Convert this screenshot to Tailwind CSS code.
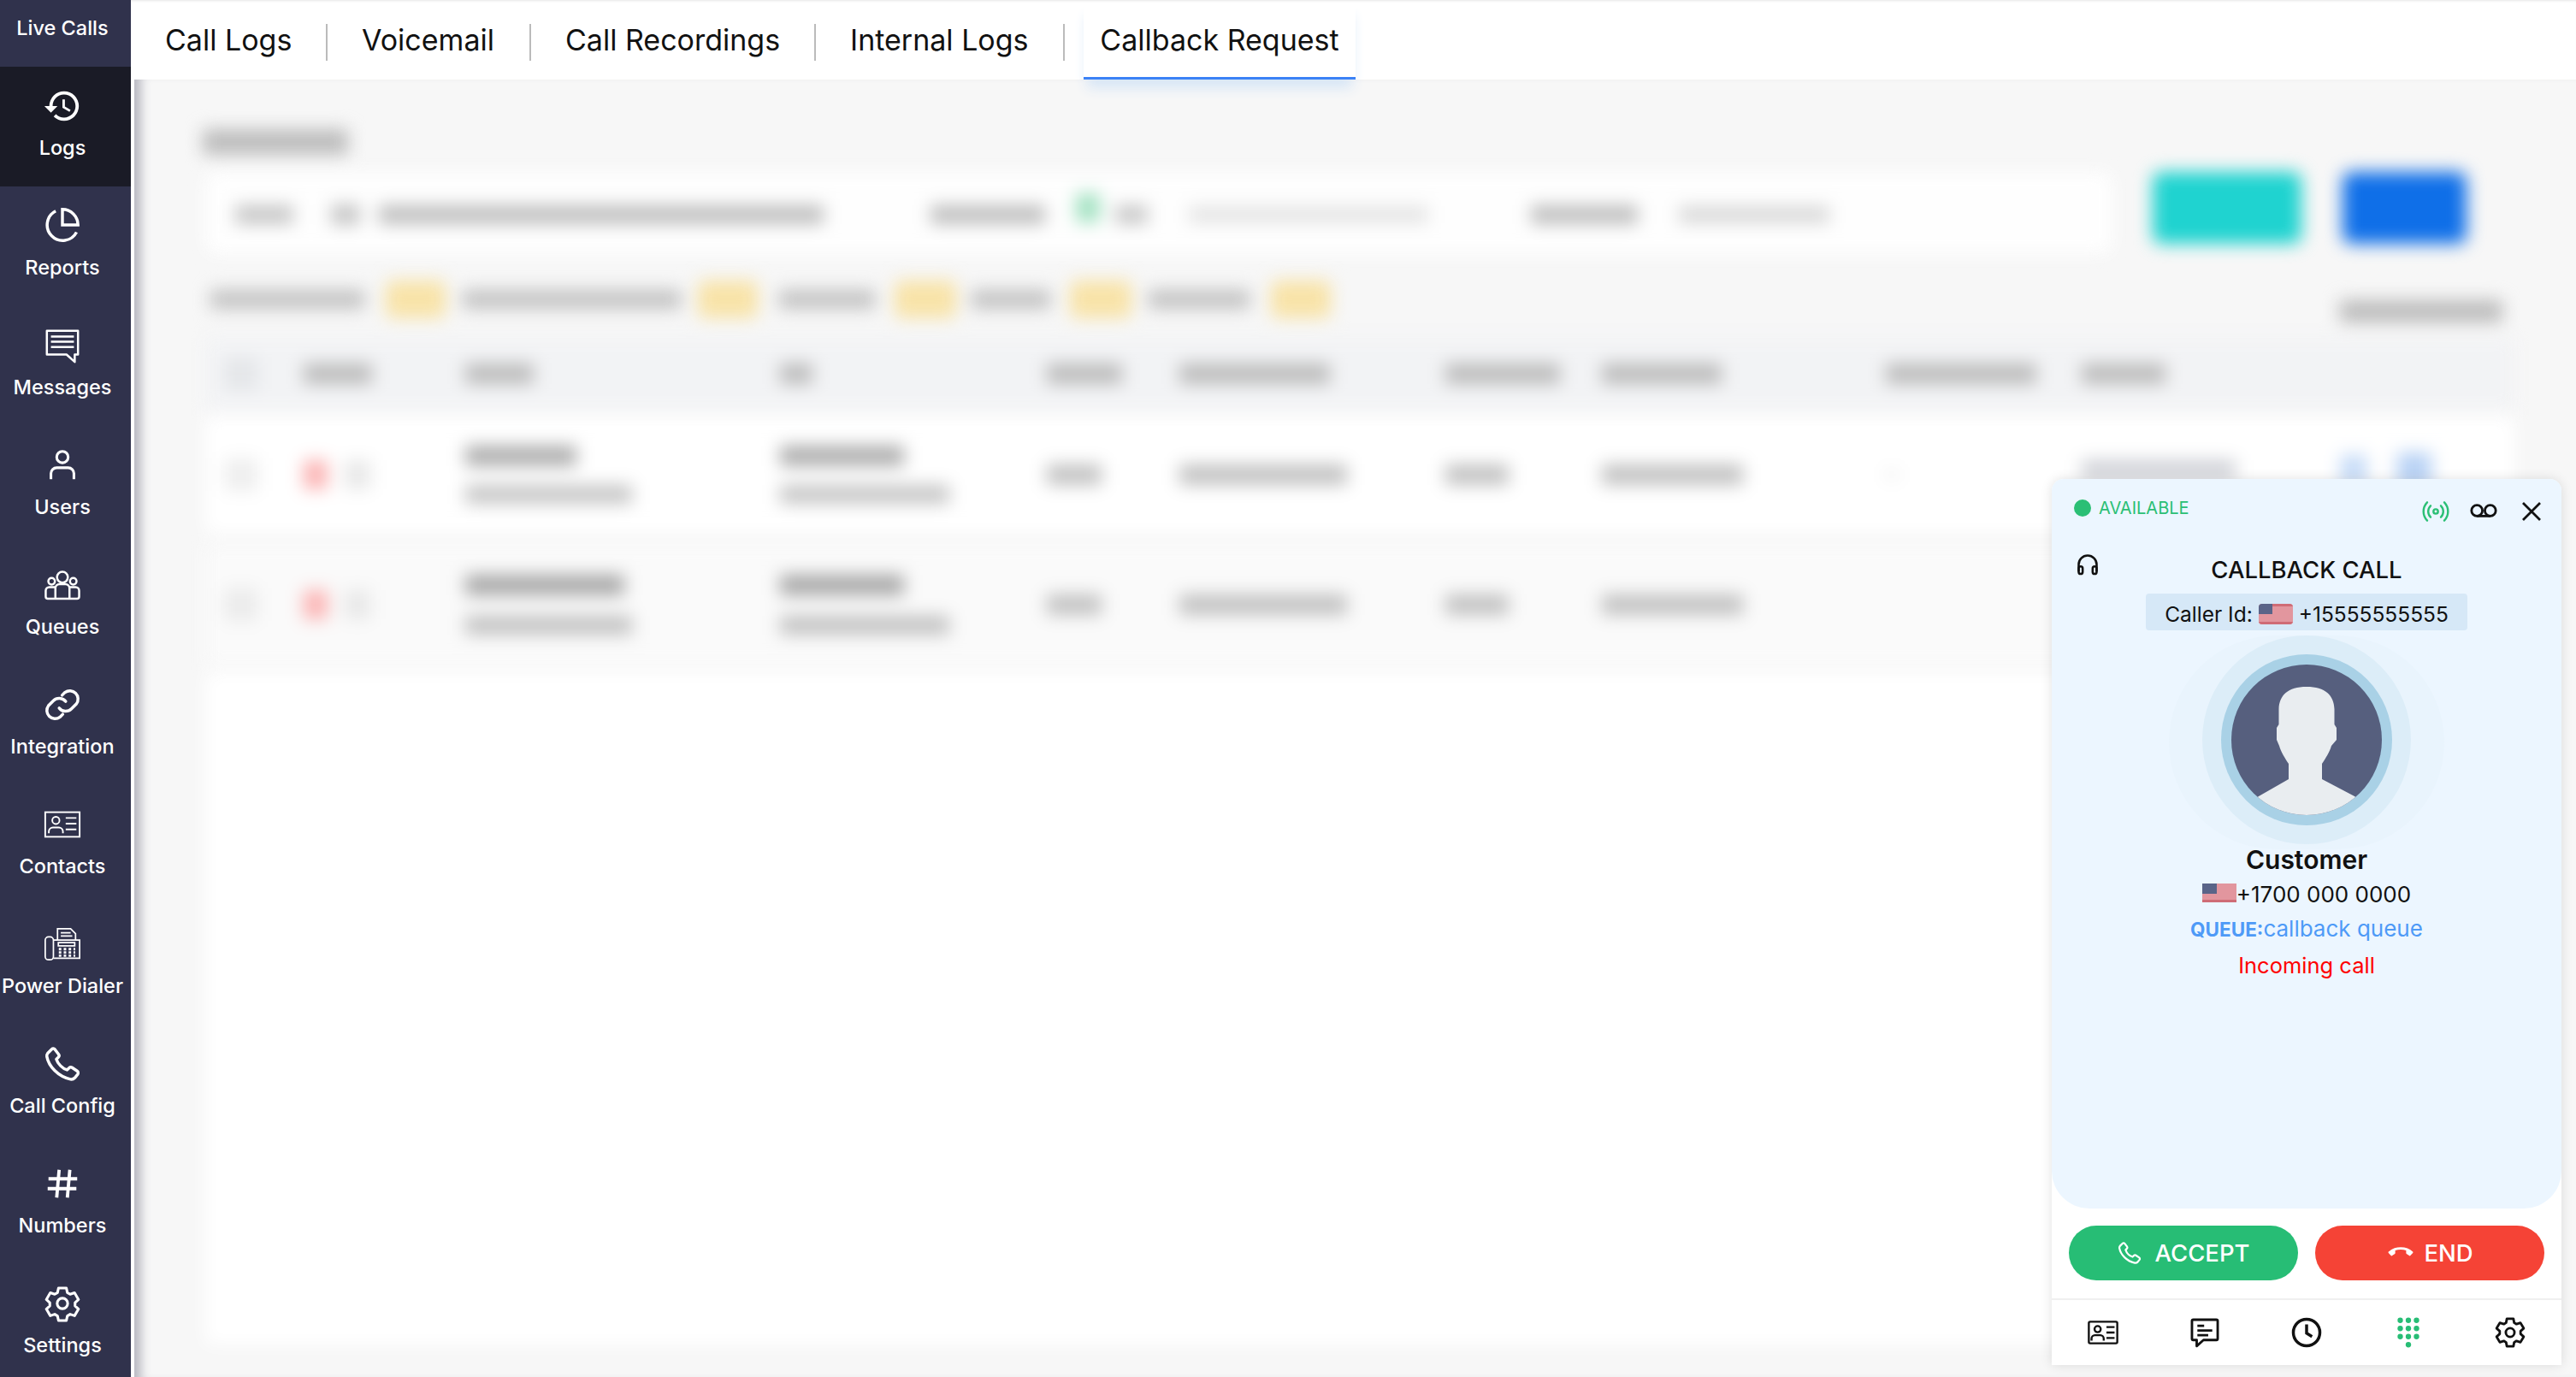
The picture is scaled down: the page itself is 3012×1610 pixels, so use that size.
<!DOCTYPE html>
<html lang="en">
<head>
    <meta charset="UTF-8">
    <title>Callback Request</title>
    <script src="https://cdn.jsdelivr.net/npm/@tailwindcss/browser@4"></script>
</head>
<body class="w-[3012px] h-[1610px] overflow-hidden flex bg-white font-['Inter',sans-serif] text-[#111]">

    <!-- Sidebar -->
    <nav class="w-[153px] h-[1610px] shrink-0 bg-[#30324c] text-white text-[23.5px] leading-[30px] font-medium overflow-hidden">
        <div class="h-[78px] flex items-center justify-center pb-[12px] pr-[7px]">Live Calls</div>

        <a class="h-[140px] flex flex-col items-center pt-[23px] pr-[7px] bg-[#1a1b26]">
            <svg class="w-[46px] h-[46px]" viewBox="0 0 24 24" fill="currentColor"><path d="M13 3a9 9 0 0 0-9 9H1l3.89 3.89.07.14L9 12H6c0-3.87 3.13-7 7-7s7 3.13 7 7-3.13 7-7 7c-1.93 0-3.68-.79-4.94-2.06l-1.42 1.42A8.954 8.954 0 0 0 13 21a9 9 0 0 0 0-18zm-1 5v5l4.28 2.54.72-1.21-3.5-2.08V8H12z"/></svg>
            <span class="mt-[11px]">Logs</span>
        </a>
        <a class="h-[140px] flex flex-col items-center pt-[23px] pr-[7px]">
            <svg class="w-[46px] h-[46px]" viewBox="0 0 24 24" fill="none" stroke="currentColor" stroke-width="1.8"><path d="M20.6 15.9A9.5 9.5 0 1 1 7.9 3"/><path d="M21.5 11.5A9.5 9.5 0 0 0 12 2v9.5z"/></svg>
            <span class="mt-[11px]">Reports</span>
        </a>
        <a class="h-[140px] flex flex-col items-center pt-[23px] pr-[7px]">
            <svg class="w-[46px] h-[46px]" viewBox="0 0 24 24" fill="none" stroke="currentColor" stroke-width="1.3" stroke-linejoin="round"><path d="M2.500 3h19v14.500h-2v4.500l-5-4.500H2.500z"/><path d="M5 6.500h14M5 9.700h14M5 12.900h14"/></svg>
            <span class="mt-[11px]">Messages</span>
        </a>
        <a class="h-[140px] flex flex-col items-center pt-[23px] pr-[7px]">
            <svg class="w-[46px] h-[46px]" viewBox="0 0 24 24" fill="none" stroke="currentColor" stroke-width="1.6"><circle cx="12" cy="7" r="3.500"/><path d="M5 20.500v-3.500a3.500 3.500 0 0 1 3.500-3.500h7a3.500 3.500 0 0 1 3.500 3.500v3.500"/></svg>
            <span class="mt-[11px]">Users</span>
        </a>
        <a class="h-[140px] flex flex-col items-center pt-[23px] pr-[7px]">
            <svg class="w-[46px] h-[46px]" viewBox="0 0 24 24" fill="none" stroke="currentColor" stroke-width="1.3"><circle cx="12" cy="7.200" r="3.300"/><circle cx="5.400" cy="9.700" r="2"/><circle cx="18.600" cy="9.700" r="2"/><path d="M7.700 20.300V14a2.500 2.500 0 0 1 2.500-2.500h3.600a2.500 2.500 0 0 1 2.500 2.500v6.300"/><path d="M7.700 13.300H4a2.200 2.200 0 0 0-2.200 2.200v3.500a1.300 1.300 0 0 0 1.300 1.300h17.800a1.300 1.300 0 0 0 1.300-1.300v-3.500a2.200 2.200 0 0 0-2.200-2.200H16.300"/></svg>
            <span class="mt-[11px]">Queues</span>
        </a>
        <a class="h-[140px] flex flex-col items-center pt-[23px] pr-[7px]">
            <svg class="w-[46px] h-[46px]" viewBox="0 0 24 24" fill="none" stroke="currentColor" stroke-width="1.8" stroke-linecap="round"><path d="M10 14a5 5 0 0 0 7.500.5l3-3a5 5 0 0 0-7-7l-1.700 1.700"/><path d="M14 10a5 5 0 0 0-7.500-.5l-3 3a5 5 0 0 0 7 7l1.700-1.700"/></svg>
            <span class="mt-[11px]">Integration</span>
        </a>
        <a class="h-[140px] flex flex-col items-center pt-[23px] pr-[7px]">
            <svg class="w-[46px] h-[46px]" viewBox="0 0 24 24" fill="none" stroke="currentColor" stroke-width="1"><rect x="1.500" y="4.500" width="21" height="15"/><circle cx="8" cy="9.500" r="2.200"/><path d="M3.700 17.300v-1a2.500 2.500 0 0 1 2.500-2.500h3.600a2.500 2.500 0 0 1 2.500 2.500v1M14 8h6.500M14 11.500h6.500M14 15h6.500"/></svg>
            <span class="mt-[11px]">Contacts</span>
        </a>
        <a class="h-[140px] flex flex-col items-center pt-[23px] pr-[7px]">
            <svg class="w-[46px] h-[46px]" viewBox="0 0 24 24" fill="none" stroke="currentColor" stroke-width="0.900"><rect x="1.500" y="7.500" width="5" height="14" rx="2"/><path d="M6.500 9.500h16v11h-16"/><path d="M9 9.500V2.500h8l3 3v4"/><path d="M11 5h6M11 7h7"/><rect x="9.500" y="11" width="10" height="2"/><path stroke-width="1.500" stroke-dasharray="1.500 1.500" d="M9.800 15h10M9.800 17h10M9.800 19h10"/></svg>
            <span class="mt-[11px]">Power Dialer</span>
        </a>
        <a class="h-[140px] flex flex-col items-center pt-[23px] pr-[7px]">
            <svg class="w-[46px] h-[46px]" viewBox="0 0 24 24" fill="none" stroke="currentColor" stroke-width="1.800" stroke-linejoin="round"><path d="M3 5.500 5.500 3a1.300 1.300 0 0 1 1.900.1l2.300 3a1.400 1.400 0 0 1-.2 1.800L8.300 9.100c.9 2.800 3.700 5.700 6.500 6.500l1.400-1.300a1.400 1.400 0 0 1 1.700-.1l3.100 2.100a1.400 1.400 0 0 1 .3 2L19.500 20.500c-.7.700-1.600 1-2.600.8C9.500 19.800 3.600 13.500 2.500 7.500c-.1-.7.100-1.500.5-2z"/></svg>
            <span class="mt-[11px]">Call Config</span>
        </a>
        <a class="h-[140px] flex flex-col items-center pt-[23px] pr-[7px]">
            <svg class="w-[46px] h-[46px]" viewBox="0 0 24 24" fill="none" stroke="currentColor" stroke-width="2"><path d="M10 3.500 8.500 20.500M16.500 3.500l-1.500 17M3.500 9H21M3 15h17.500"/></svg>
            <span class="mt-[11px]">Numbers</span>
        </a>
        <a class="h-[140px] flex flex-col items-center pt-[23px] pr-[7px]">
            <svg class="w-[46px] h-[46px]" viewBox="0 0 24 24" fill="none" stroke="currentColor" stroke-width="1.600" stroke-linejoin="round"><path d="M9.600 2.600h4.800l.6 2.800 1.700 1 2.700-.9 2.400 4.100-2.100 1.900v2l2.100 1.900-2.400 4.100-2.700-.9-1.700 1-.6 2.800H9.600l-.6-2.800-1.700-1-2.700.9-2.400-4.100 2.100-1.900v-2L2.200 9.600l2.400-4.100 2.700.9 1.700-1z"/><circle cx="12" cy="12" r="3.200"/></svg>
            <span class="mt-[11px]">Settings</span>
        </a>
    </nav>

    <!-- Main -->
    <div class="flex-1 min-w-0 flex flex-col relative">
        <!-- Tabs -->
        <div class="h-[93px] shrink-0 bg-white flex items-stretch text-[34px] shadow-[inset_0_3px_3px_-2px_#e5e5e5]">
            <div class="w-[228px] pl-[40px] flex items-center"><a>Call Logs</a></div>
            <div class="w-[2px] h-[43px] mt-[28px] bg-[#bbb]"></div>
            <div class="w-[236px] pl-[40px] flex items-center"><a>Voicemail</a></div>
            <div class="w-[2px] h-[43px] mt-[28px] bg-[#bbb]"></div>
            <div class="w-[331px] pl-[40px] flex items-center"><a>Call Recordings</a></div>
            <div class="w-[2px] h-[43px] mt-[28px] bg-[#bbb]"></div>
            <div class="w-[289px] pl-[40px] flex items-center"><a>Internal Logs</a></div>
            <div class="w-[2px] h-[43px] mt-[28px] bg-[#bbb]"></div>
            <div class="ml-[22px] w-[318px] pt-[3px] flex items-center justify-center border-b-[3px] border-[#3b82f6] shadow-[0_14px_14px_-4px_#d7e6f6] relative z-10"><a>Callback Request</a></div>
        </div>

        <!-- Blurred page content -->
        <div class="flex-1 bg-[#f7f7f7] shadow-[inset_16px_0_12px_-8px_#b9b9c2] ml-[4px] overflow-hidden" aria-hidden="true">
            <div class="blur-[10px] pl-[83px] pr-[60px]">
                <div class="w-[170px] h-[30px] mt-[58px] -ml-[3px] bg-[#bdbdbd]"></div>

                <!-- Filter bar -->
                <div class="flex items-start mt-[20px]">
                    <div class="w-[2230px] h-[96px] bg-[#fefefe] rounded-[12px] flex items-center pl-[35px] pt-[4px]">
                        <div class="w-[68px] h-[22px] bg-[#c6c6c6]"></div>
                        <div class="w-[34px] h-[24px] ml-[44px] bg-[#c6c6c6]"></div>
                        <div class="w-[520px] h-[22px] ml-[22px] bg-[#bebebe]"></div>
                        <div class="w-[134px] h-[22px] ml-[125px] bg-[#bebebe]"></div>
                        <div class="w-[28px] h-[34px] ml-[36px] -mt-[16px] bg-[#a3e2c2]"></div>
                        <div class="w-[38px] h-[22px] ml-[18px] bg-[#c8c8c8]"></div>
                        <div class="w-[280px] h-[20px] ml-[48px] bg-[#e4e4e4]"></div>
                        <div class="w-[125px] h-[22px] ml-[120px] bg-[#bebebe]"></div>
                        <div class="w-[176px] h-[20px] ml-[48px] bg-[#d8d8d8]"></div>
                    </div>
                    <div class="w-[174px] h-[84px] ml-[47px] rounded-[10px] bg-[#1fd3d0]"></div>
                    <div class="w-[145px] h-[84px] ml-[48px] rounded-[10px] bg-[#0f6fe8]"></div>
                </div>

                <!-- Summary badges -->
                <div class="flex items-center mt-[28px] pl-[6px] h-[50px]">
                    <div class="w-[180px] h-[22px] bg-[#c2c2c2]"></div>
                    <div class="w-[70px] h-[44px] ml-[25px] rounded-[8px] bg-[#f8e3a8]"></div>
                    <div class="w-[255px] h-[22px] ml-[20px] bg-[#c2c2c2]"></div>
                    <div class="w-[70px] h-[44px] ml-[20px] rounded-[8px] bg-[#f8e3a8]"></div>
                    <div class="w-[112px] h-[22px] ml-[25px] bg-[#c2c2c2]"></div>
                    <div class="w-[72px] h-[44px] ml-[23px] rounded-[8px] bg-[#f8e3a8]"></div>
                    <div class="w-[92px] h-[22px] ml-[18px] bg-[#c2c2c2]"></div>
                    <div class="w-[72px] h-[44px] ml-[23px] rounded-[8px] bg-[#f8e3a8]"></div>
                    <div class="w-[118px] h-[22px] ml-[20px] bg-[#c2c2c2]"></div>
                    <div class="w-[70px] h-[44px] ml-[25px] rounded-[8px] bg-[#f8e3a8]"></div>
                    <div class="w-[190px] h-[26px] ml-[1180px] mt-[28px] bg-[#bcbcbc]"></div>
                </div>

                <!-- Table -->
                <div class="w-[2700px] mt-[20px]">
                    <div class="h-[84px] bg-[#f2f3f5] flex items-center pl-[23px]">
                        <div class="w-[92px]"><div class="w-[38px] h-[38px] bg-[#e4e6e9]"></div></div>
                        <div class="w-[189px]"><div class="w-[80px] h-[24px] bg-[#bcbcbc]"></div></div>
                        <div class="w-[368px]"><div class="w-[80px] h-[24px] bg-[#bcbcbc]"></div></div>
                        <div class="w-[312px]"><div class="w-[38px] h-[24px] bg-[#bcbcbc]"></div></div>
                        <div class="w-[155px]"><div class="w-[88px] h-[24px] bg-[#bcbcbc]"></div></div>
                        <div class="w-[311px]"><div class="w-[176px] h-[24px] bg-[#bcbcbc]"></div></div>
                        <div class="w-[183px]"><div class="w-[134px] h-[24px] bg-[#bcbcbc]"></div></div>
                        <div class="w-[332px]"><div class="w-[140px] h-[24px] bg-[#bcbcbc]"></div></div>
                        <div class="w-[229px]"><div class="w-[176px] h-[24px] bg-[#bcbcbc]"></div></div>
                        <div class="w-[98px] h-[24px] bg-[#bcbcbc]"></div>
                    </div>

                    <div class="h-[136px] mt-[8px] bg-white flex items-center pl-[23px]">
                        <div class="w-[92px]"><div class="w-[38px] h-[38px] bg-[#eeeeee]"></div></div>
                        <div class="w-[189px] flex gap-[20px]"><div class="w-[28px] h-[34px] bg-[#fbb4b4]"></div><div class="w-[30px] h-[34px] bg-[#e8e8e8]"></div></div>
                        <div class="w-[368px] flex flex-col gap-[22px]"><div class="w-[130px] h-[24px] bg-[#aeaeae]"></div><div class="w-[195px] h-[22px] bg-[#c6c6c6]"></div></div>
                        <div class="w-[312px] flex flex-col gap-[22px]"><div class="w-[145px] h-[24px] bg-[#aeaeae]"></div><div class="w-[198px] h-[22px] bg-[#c6c6c6]"></div></div>
                        <div class="w-[155px]"><div class="w-[64px] h-[24px] bg-[#c2c2c2]"></div></div>
                        <div class="w-[311px]"><div class="w-[196px] h-[24px] bg-[#c2c2c2]"></div></div>
                        <div class="w-[183px]"><div class="w-[74px] h-[24px] bg-[#c2c2c2]"></div></div>
                        <div class="w-[332px]"><div class="w-[165px] h-[24px] bg-[#c2c2c2]"></div></div>
                        <div class="w-[229px]"><div class="w-[14px] h-[6px] bg-[#e0e0e0]"></div></div>
                        <div class="w-[303px] -mt-[12px]"><div class="w-[180px] h-[22px] bg-[#ced0d6]"></div></div>
                        <div class="w-[30px] h-[34px] -mt-[12px] bg-[#c4daf7]"></div>
                        <div class="w-[40px] h-[40px] ml-[36px] -mt-[12px] bg-[#b8d2f5]"></div>
                    </div>

                    <div class="h-[140px] mt-[14px] bg-[#fafafa] flex items-center pl-[23px]">
                        <div class="w-[92px]"><div class="w-[38px] h-[38px] bg-[#ebebeb]"></div></div>
                        <div class="w-[189px] flex gap-[20px]"><div class="w-[28px] h-[34px] bg-[#fbb4b4]"></div><div class="w-[30px] h-[34px] bg-[#e8e8e8]"></div></div>
                        <div class="w-[368px] flex flex-col gap-[24px]"><div class="w-[186px] h-[24px] bg-[#a8a8a8]"></div><div class="w-[195px] h-[22px] bg-[#c2c2c2]"></div></div>
                        <div class="w-[312px] flex flex-col gap-[24px]"><div class="w-[145px] h-[24px] bg-[#a8a8a8]"></div><div class="w-[198px] h-[22px] bg-[#c2c2c2]"></div></div>
                        <div class="w-[155px]"><div class="w-[64px] h-[24px] bg-[#c2c2c2]"></div></div>
                        <div class="w-[311px]"><div class="w-[196px] h-[24px] bg-[#c2c2c2]"></div></div>
                        <div class="w-[183px]"><div class="w-[74px] h-[24px] bg-[#c2c2c2]"></div></div>
                        <div class="w-[332px]"><div class="w-[165px] h-[24px] bg-[#c2c2c2]"></div></div>
                    </div>

                    <div class="h-[785px] mt-[10px] bg-white"></div>
                </div>
            </div>
        </div>

        <!-- Softphone -->
        <div class="absolute left-[2246px] top-[560px] z-20 w-[596px] h-[1036px] bg-white rounded-t-[14px] shadow-[0_0_14px_rgba(0,0,0,0.12)] flex flex-col">
            <div class="h-[853px] bg-[#ecf6ff] rounded-t-[14px] rounded-b-[44px] flex flex-col items-center relative">
                <!-- status row -->
                <div class="absolute left-[26px] top-[24px] flex items-center gap-[9px] text-[20px] leading-[20px] text-[#2bbf75]">
                    <span class="w-[20px] h-[20px] rounded-full bg-[#2bbf75]"></span>AVAILABLE
                </div>
                <svg class="absolute left-[433px] top-[22px] w-[32px] h-[32px] text-[#2bbf75]" viewBox="0 0 24 24" fill="none" stroke="currentColor" stroke-width="1.800" stroke-linecap="round"><circle cx="12" cy="12" r="2"/><path d="M7.500 7a7 7 0 0 0 0 10M16.500 7a7 7 0 0 1 0 10M4.500 4a11.500 11.500 0 0 0 0 16M19.500 4a11.500 11.500 0 0 1 0 16"/></svg>
                <svg class="absolute left-[488px] top-[20px] w-[34px] h-[34px]" viewBox="0 0 24 24" fill="none" stroke="currentColor" stroke-width="2"><circle cx="6.500" cy="12" r="4.500"/><circle cx="17.500" cy="12" r="4.500"/><path d="M6.500 16.500h11"/></svg>
                <svg class="absolute left-[546px] top-[23px] w-[30px] h-[30px]" viewBox="0 0 24 24" fill="none" stroke="currentColor" stroke-width="2.200"><path d="M4 4l16 16M20 4L4 20"/></svg>
                <svg class="absolute left-[28px] top-[86px] w-[28px] h-[28px]" viewBox="0 0 24 24" fill="none" stroke="currentColor" stroke-width="2.200" stroke-linejoin="round"><path d="M3 19v-7a9 9 0 0 1 18 0v7"/><rect x="3" y="14" width="4" height="7.500" rx="2"/><rect x="17" y="14" width="4" height="7.500" rx="2"/></svg>

                <div class="mt-[88px] text-[27.5px] leading-[36px] font-medium">CALLBACK CALL</div>
                <div class="mt-[10px] w-[376px] h-[43px] pt-[5px] rounded-[4px] bg-[#d6e8f7] flex items-center justify-center gap-[7px] text-[24.5px]">
                    Caller Id:
                    <svg class="w-[40px] h-[24px] rounded-[4px] overflow-hidden" viewBox="0 0 40 24"><rect width="40" height="24" fill="#e2969e"/><path d="M0 21h40v3H0zM16 0h24v3H16z" fill="#cf6c76"/><rect width="16" height="12" fill="#5a6488"/></svg>
                    +15555555555
                </div>

                <!-- avatar -->
                <div class="mt-[6px] w-[322px] h-[244px] flex items-center justify-center relative">
                    <div class="absolute left-0 top-0 w-[322px] h-[250px] rounded-full bg-[#e9f4fd]"></div>
                    <div class="absolute left-[39px] top-0 w-[244px] h-[244px] rounded-full bg-[#dcedf8]"></div>
                    <div class="relative w-[200px] h-[200px] rounded-full bg-[#a9d1e6] flex items-center justify-center">
                        <svg class="w-[176px] h-[176px] rounded-full bg-[#565f7e]" viewBox="0 0 176 176"><path fill="#e9edf0" d="M88 26C66 26 56 36 55.500 52V70L53 74V88L56 95C58 102 63 110 67 116V134L32 154L0 176H176L144 154L106 134V116C110 110 115 102 117 95L123 88V74L120.500 70V52C120 36 110 26 88 26Z"/></svg>
                    </div>
                </div>

                <div class="text-[30px] leading-[36px] font-semibold">Customer</div>
                <div class="mt-[6px] flex items-center text-[26px] leading-[34px]">
                    <svg class="w-[40px] h-[22px] -mt-[4px]" viewBox="0 0 40 22"><rect width="40" height="22" fill="#e2969e"/><path d="M0 19h40v3H0z" fill="#cf6c76"/><rect width="17" height="12" fill="#5a6488"/></svg>
                    +1700 000 0000
                </div>
                <div class="mt-[6px] text-[26px] leading-[34px] text-[#4e9af7]"><b class="text-[22.500px]">QUEUE:</b>callback queue</div>
                <div class="mt-[8px] text-[25.500px] leading-[34px] text-[#ff0000]">Incoming call</div>
            </div>

            <!-- accept / end -->
            <div class="flex gap-[20px] px-[20px] pt-[20px] pb-[21px] border-b-2 border-[#efefef]">
                <button class="flex-1 h-[64px] pt-[2px] rounded-full bg-[#27bd75] text-white text-[27.500px] font-medium flex items-center justify-center gap-[14px]">
                    <svg class="w-[30px] h-[30px] -mt-[2px]" viewBox="0 0 24 24" fill="none" stroke="currentColor" stroke-width="1.800" stroke-linejoin="round"><path d="M3 5.500 5.500 3a1.300 1.300 0 0 1 1.900.1l2.300 3a1.400 1.400 0 0 1-.2 1.800L8.300 9.100c.9 2.800 3.700 5.700 6.500 6.500l1.400-1.300a1.400 1.400 0 0 1 1.700-.1l3.100 2.100a1.400 1.400 0 0 1 .3 2L19.500 20.500c-.7.700-1.600 1-2.600.8C9.500 19.800 3.600 13.500 2.500 7.500c-.1-.7.100-1.500.5-2z"/></svg>
                    ACCEPT
                </button>
                <button class="flex-1 h-[64px] pt-[2px] rounded-full bg-[#f54336] text-white text-[27.500px] font-medium flex items-center justify-center gap-[10px]">
                    <svg class="w-[34px] h-[34px] -mt-[4px]" viewBox="0 0 24 24" fill="currentColor"><path d="M12 8c-4 0-7.600 1.300-10 3.700-.3.300-.3.700 0 1l2 2.200c.3.300.7.300 1 0l2.200-1.500c.2-.2.300-.400.300-.700v-2.200c1.400-.4 2.900-.6 4.500-.6s3.100.2 4.500.6v2.200c0 .3.100.5.300.7l2.200 1.500c.3.300.7.300 1 0l2-2.200c.3-.3.300-.7 0-1-2.400-2.400-6-3.700-10-3.700z"/></svg>
                    END
                </button>
            </div>

            <!-- softphone nav -->
            <div class="flex-1 flex items-center justify-around">
                <svg class="w-[38px] h-[38px]" viewBox="0 0 24 24" fill="none" stroke="currentColor" stroke-width="1.500"><rect x="1.500" y="4" width="21" height="16" rx="1"/><circle cx="8" cy="9.500" r="2.300"/><path d="M3.500 18v-1.500a2.500 2.500 0 0 1 2.500-2.500h4a2.500 2.500 0 0 1 2.500 2.500V18M14.500 8h6M14.500 12h6M14.500 16h6"/></svg>
                <svg class="w-[38px] h-[38px]" viewBox="0 0 24 24" fill="none" stroke="currentColor" stroke-width="1.800" stroke-linejoin="round"><path d="M2.500 3.500a1 1 0 0 1 1-1h17a1 1 0 0 1 1 1v13a1 1 0 0 1-1 1H11l-5 4.500v-4.500H3.500a1 1 0 0 1-1-1z"/><path d="M6.500 7h5M6.500 10.500h11M6.500 14h8"/></svg>
                <svg class="w-[38px] h-[38px]" viewBox="0 0 24 24" fill="none" stroke="currentColor" stroke-width="2.200"><circle cx="12" cy="12" r="9.800"/><path d="M12 6v6.500l4 2.500"/></svg>
                <svg class="w-[38px] h-[38px] text-[#27bd75]" viewBox="0 0 24 24" fill="currentColor"><circle cx="6" cy="3" r="2"/><circle cx="12" cy="3" r="2"/><circle cx="18" cy="3" r="2"/><circle cx="6" cy="9" r="2"/><circle cx="12" cy="9" r="2"/><circle cx="18" cy="9" r="2"/><circle cx="6" cy="15" r="2"/><circle cx="12" cy="15" r="2"/><circle cx="18" cy="15" r="2"/><circle cx="12" cy="21" r="2"/></svg>
                <svg class="w-[38px] h-[38px]" viewBox="0 0 24 24" fill="none" stroke="currentColor" stroke-width="1.800" stroke-linejoin="round"><path d="M9.600 1.800h4.800l.6 3 1.700 1 2.900-1 2.400 4.100-2.300 2.100v2l2.300 2.100-2.400 4.100-2.900-1-1.700 1-.6 3H9.600l-.6-3-1.700-1-2.900 1-2.400-4.100 2.300-2.100v-2L2 8.900l2.400-4.100 2.900 1 1.700-1z"/><circle cx="12" cy="12" r="3.200"/></svg>
            </div>
        </div>
    </div>
</body>
</html>
